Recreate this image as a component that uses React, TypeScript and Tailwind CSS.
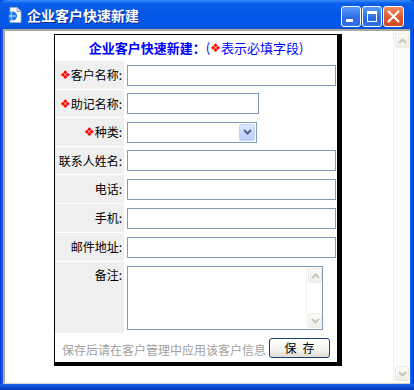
const font = "font-['Noto_Sans_CJK_SC','Noto_Sans',sans-serif]";
const hatch =
  "bg-[repeating-conic-gradient(#eaeaea_0_25%,#f4f4f4_0_50%)] bg-[length:2px_2px]";

function Star() {
  return <span className="text-[#ff0000] font-['DejaVu_Sans',sans-serif] text-[12px] leading-none">❖</span>;
}

function Chevron({ up, color = "#c9c6b8" }: { up?: boolean; color?: string }) {
  return (
    <svg width="9" height="6" viewBox="0 0 9 6">
      <polyline
        points={up ? "1,5 4.5,1.5 8,5" : "1,1 4.5,4.5 8,1"}
        fill="none"
        stroke={color}
        strokeWidth="2"
      />
    </svg>
  );
}

function ScrollBtn({ up }: { up?: boolean }) {
  return (
    <div className="w-[14px] h-[15px] rounded-[2px] border border-[#ecebe4] bg-[linear-gradient(#fbfbf9,#efeee8)] flex items-center justify-center">
      <Chevron up={up} />
    </div>
  );
}

function Row({
  label,
  required,
  h,
  children,
}: {
  label: string;
  required?: boolean;
  h: string;
  children: React.ReactNode;
}) {
  return (
    <div className={`flex ${h}`}>
      <div className={`w-[69px] shrink-0 ${hatch} flex items-center justify-end pr-[2px] text-[12px] text-black`}>
        {required && <Star />}
        {label}:
      </div>
      <div className="flex-1 flex items-center pl-[3px]">{children}</div>
    </div>
  );
}

function Input({ w }: { w: string }) {
  return <div className={`${w} h-[21px] border border-[#7f9db9] bg-white`} />;
}

export default function App() {
  return (
    <div className={`w-[414px] h-[390px] flex flex-col bg-[#0a4fe0] ${font}`}>
      {/* title bar */}
      <div className="h-[29px] shrink-0 flex items-center pl-[7px] pr-[10px] rounded-t-[6px] bg-[linear-gradient(#3a8cf8,#0a5fea_12%,#0356e6_50%,#0459ea_85%,#0a4fd4)]">
        <svg width="16" height="16" viewBox="0 0 16 16">
          <path d="M3 0.5h7l4 4v11h-11z" fill="#fff" stroke="#9ab" strokeWidth="1" />
          <path d="M10 0.5v4h4" fill="#dde" stroke="#9ab" strokeWidth="1" />
          <circle cx="5.5" cy="9" r="4.5" fill="#1f7ae0" />
          <path d="M2 9h7M5.5 5c-2 2-2 6 0 8" stroke="#bfe0ff" strokeWidth="1" fill="none" />
        </svg>
        <span className="ml-[4px] text-white font-bold text-[14px] leading-none [text-shadow:1px_1px_#0a2a9a]">
          企业客户快速新建
        </span>
        <div className="ml-auto flex gap-px mt-[3px]">
          <div className="w-[20px] h-[21px] rounded-[3px] border border-white bg-[linear-gradient(#5a9af8,#2a6be6_60%,#2f6fe8)]">
            <svg width="18" height="19" viewBox="0 0 18 19">
              <rect x="4" y="12" width="7" height="3" fill="#fff" />
            </svg>
          </div>
          <div className="w-[20px] h-[21px] rounded-[3px] border border-white bg-[linear-gradient(#5a9af8,#2a6be6_60%,#2f6fe8)]">
            <svg width="18" height="19" viewBox="0 0 18 19">
              <path d="M4 4h10v11h-10zM5 7v7h8v-7z" fill="#fff" fillRule="evenodd" />
            </svg>
          </div>
          <div className="w-[21px] h-[21px] rounded-[3px] border border-white bg-[linear-gradient(#f08a60,#dd5a2e_55%,#d04a1f)]">
            <svg width="19" height="19" viewBox="0 0 19 19">
              <path d="M4 4l11 11M15 4l-11 11" stroke="#fff" strokeWidth="2.2" />
            </svg>
          </div>
        </div>
      </div>

      {/* body */}
      <div className="flex flex-1 min-h-0">
        <div className="w-[3px] bg-[linear-gradient(90deg,#0831d9,#166aee)]" />
        <div className="flex-1 flex bg-white border-l-2 border-t-2 border-b border-[#a9a8a2] border-b-[#d6d3c8]">
          {/* page content */}
          <div className="flex-1">
            <div className="ml-[49px] mt-[3px] w-[288px] border-l border-t border-black border-r-[5px] border-b-[4px] flex flex-col gap-px bg-white">
              <div className="h-[25px] flex items-center justify-center text-[13px] text-[#0000ff]">
                <span className="font-bold">企业客户快速新建：</span>
                <span>(</span>
                <Star />
                <span>表示必填字段)</span>
              </div>
              <Row label="客户名称" required h="h-[28px]">
                <Input w="w-[209px]" />
              </Row>
              <Row label="助记名称" required h="h-[27px]">
                <Input w="w-[132px]" />
              </Row>
              <Row label="种类" required h="h-[28px]">
                <div className="w-[130px] h-[21px] border border-[#7f9db9] bg-white flex justify-end items-center pr-px">
                  <div className="w-[16px] h-[17px] rounded-[2px] border border-[#c3d3fd] bg-[linear-gradient(#dce6fe,#b9cdfa)] flex items-center justify-center">
                    <Chevron color="#4d6185" />
                  </div>
                </div>
              </Row>
              <Row label="联系人姓名" h="h-[27px]">
                <Input w="w-[209px]" />
              </Row>
              <Row label="电话" h="h-[28px]">
                <Input w="w-[209px]" />
              </Row>
              <Row label="手机" h="h-[28px]">
                <Input w="w-[209px]" />
              </Row>
              <Row label="邮件地址" h="h-[28px]">
                <Input w="w-[209px]" />
              </Row>
              <div className="flex h-[71px]">
                <div className={`w-[69px] shrink-0 ${hatch} flex justify-end pr-[2px] pt-[4px] text-[12px] text-black leading-[17px]`}>
                  备注:
                </div>
                <div className="flex-1 pl-[3px] pt-[4px]">
                  <div className="w-[196px] h-[64px] border border-[#7f9db9] bg-white flex justify-end">
                    <div className="w-[16px] border-l border-[#f3f3f3] flex flex-col justify-between py-px pl-px">
                      <ScrollBtn up />
                      <ScrollBtn />
                    </div>
                  </div>
                </div>
              </div>
              <div className="h-[28px] flex justify-center items-start pt-[4px] gap-[3px]">
                <span className="text-[12px] leading-[12px] mt-[6px] text-[#a0a0a0]">
                  保存后请在客户管理中应用该客户信息
                </span>
                <div className="w-[61px] h-[20px] rounded-[3px] border border-[#1b3f78] bg-[linear-gradient(#ffffff,#f4f3ee_60%,#dedbd0)] flex items-center justify-center gap-[6px] text-[12px] text-black">
                  <span>保</span>
                  <span>存</span>
                </div>
              </div>
            </div>
          </div>
          {/* page scrollbar */}
          <div className="w-[17px] bg-[#fdfdfd] border-l border-[#efefef] flex flex-col justify-between py-[2px] pl-px">
            <ScrollBtn up />
            <ScrollBtn />
          </div>
        </div>
        <div className="w-[4px] bg-[linear-gradient(90deg,#166aee,#0831d9)]" />
      </div>
      <div className="h-[6px] shrink-0 bg-[linear-gradient(#1663ea,#0733b8)]" />
    </div>
  );
}
